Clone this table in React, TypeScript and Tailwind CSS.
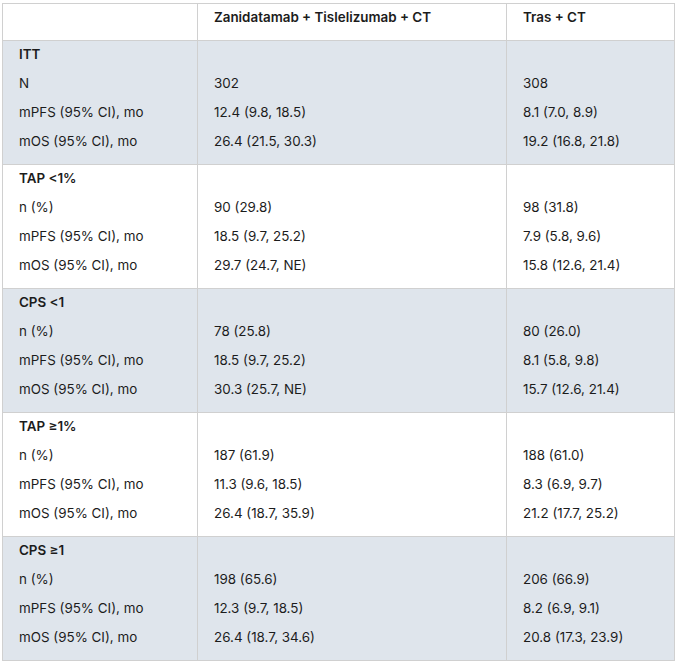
const groups = [
  {
    label: "ITT",
    rows: [
      ["N", "302", "308"],
      ["mPFS (95% CI), mo", "12.4 (9.8, 18.5)", "8.1 (7.0, 8.9)"],
      ["mOS (95% CI), mo", "26.4 (21.5, 30.3)", "19.2 (16.8, 21.8)"],
    ],
  },
  {
    label: "TAP <1%",
    rows: [
      ["n (%)", "90 (29.8)", "98 (31.8)"],
      ["mPFS (95% CI), mo", "18.5 (9.7, 25.2)", "7.9 (5.8, 9.6)"],
      ["mOS (95% CI), mo", "29.7 (24.7, NE)", "15.8 (12.6, 21.4)"],
    ],
  },
  {
    label: "CPS <1",
    rows: [
      ["n (%)", "78 (25.8)", "80 (26.0)"],
      ["mPFS (95% CI), mo", "18.5 (9.7, 25.2)", "8.1 (5.8, 9.8)"],
      ["mOS (95% CI), mo", "30.3 (25.7, NE)", "15.7 (12.6, 21.4)"],
    ],
  },
  {
    label: "TAP ≥1%",
    rows: [
      ["n (%)", "187 (61.9)", "188 (61.0)"],
      ["mPFS (95% CI), mo", "11.3 (9.6, 18.5)", "8.3 (6.9, 9.7)"],
      ["mOS (95% CI), mo", "26.4 (18.7, 35.9)", "21.2 (17.7, 25.2)"],
    ],
  },
  {
    label: "CPS ≥1",
    rows: [
      ["n (%)", "198 (65.6)", "206 (66.9)"],
      ["mPFS (95% CI), mo", "12.3 (9.7, 18.5)", "8.2 (6.9, 9.1)"],
      ["mOS (95% CI), mo", "26.4 (18.7, 34.6)", "20.8 (17.3, 23.9)"],
    ],
  },
];

export default function App() {
  return (
    <div className="bg-white min-h-screen pt-[3px] pl-[2px] font-['Inter','Liberation_Sans',sans-serif] text-[13.4px] text-[#1c1c1c]">
      <div className="w-[673px] border-l border-t border-[#d0d0d0]">
        <div className="grid grid-cols-[195px_309px_168px] font-semibold">
          <div className="h-[37px] border-r border-b border-[#d0d0d0] px-4 pt-[3px] leading-5" />
          <div className="h-[37px] border-r border-b border-[#d0d0d0] px-4 pt-[3px] leading-5">
            Zanidatamab + Tislelizumab + CT
          </div>
          <div className="h-[37px] border-r border-b border-[#d0d0d0] px-4 pt-[3px] leading-5">Tras + CT</div>
        </div>

        {groups.map((g, i) => (
          <div
            key={g.label}
            className={`grid grid-cols-[195px_309px_168px] ${i % 2 === 0 ? "bg-[#dfe5ec]" : "bg-white"}`}
          >
            <div className="h-[124px] border-r border-b border-[#d0d0d0] px-4 pt-[3px] flex flex-col gap-[9px] leading-5">
              <div className="font-semibold">{g.label}</div>
              {g.rows.map((r) => (
                <div key={r[0]}>{r[0]}</div>
              ))}
            </div>
            <div className="h-[124px] border-r border-b border-[#d0d0d0] px-4 pt-[3px] flex flex-col gap-[9px] leading-5">
              <div>&nbsp;</div>
              {g.rows.map((r) => (
                <div key={r[0]}>{r[1]}</div>
              ))}
            </div>
            <div className="h-[124px] border-r border-b border-[#d0d0d0] px-4 pt-[3px] flex flex-col gap-[9px] leading-5">
              <div>&nbsp;</div>
              {g.rows.map((r) => (
                <div key={r[0]}>{r[2]}</div>
              ))}
            </div>
          </div>
        ))}
      </div>
    </div>
  );
}
